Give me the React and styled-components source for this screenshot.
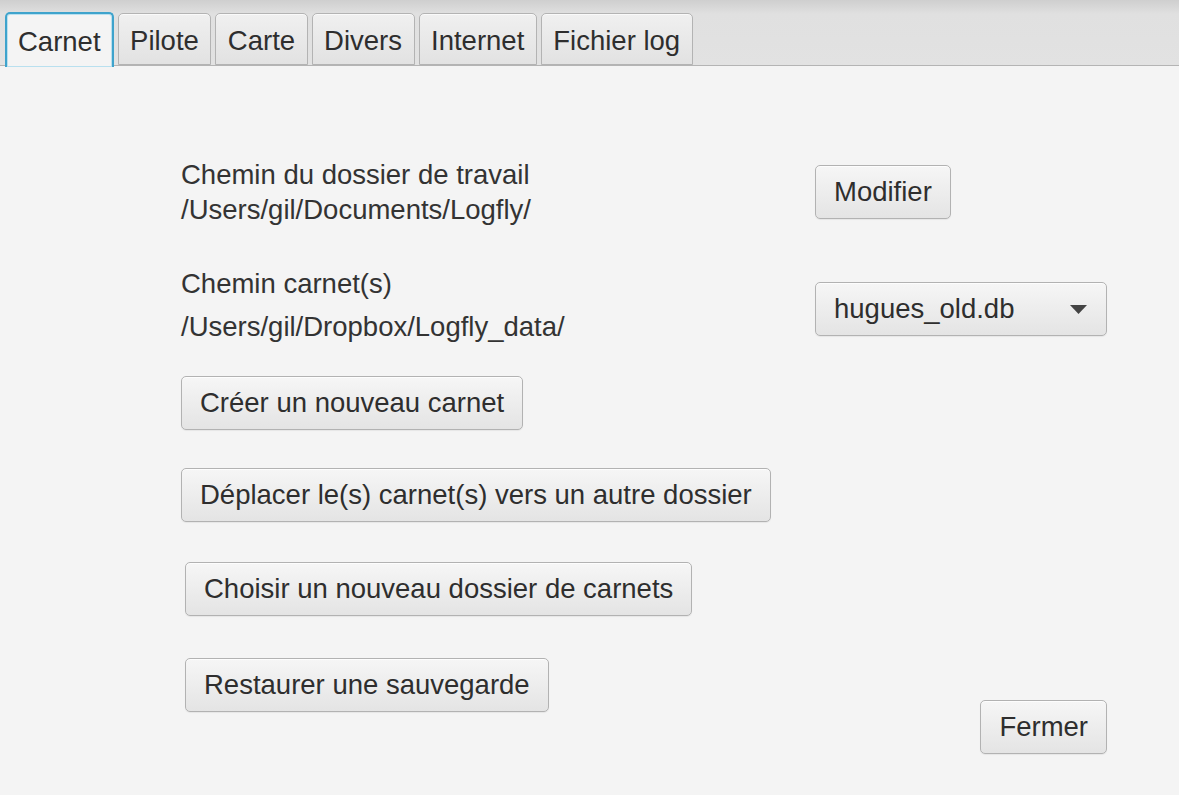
import React, { useState } from 'react';
import styled, { createGlobalStyle } from 'styled-components';

const GlobalStyle = createGlobalStyle`
  html, body {
    margin: 0;
    padding: 0;
    background: #f4f4f4;
  }
  body {
    font-family: "Liberation Sans", Arial, sans-serif;
    color: #333;
  }
`;

const Window = styled.div`
  width: 1179px;
  height: 795px;
  background: #f4f4f4;
  display: flex;
  flex-direction: column;
  overflow: hidden;
`;

const TabBar = styled.div`
  height: 65px;
  flex: none;
  display: flex;
  align-items: flex-end;
  gap: 4px;
  padding-left: 5px;
  background: linear-gradient(#cfcfcf 0px, #e0e0e0 14px, #e2e2e2 100%);
  border-bottom: 1px solid #b4b4b4;
`;

const Tab = styled.div`
  height: ${p => (p.active ? '55px' : '52px')};
  margin-bottom: ${p => (p.active ? '-2px' : '0')};
  padding: 0 ${p => (p.active ? '11px' : '11.5px')};
  padding-top: 3px;
  box-sizing: border-box;
  display: flex;
  align-items: center;
  font-size: 27.5px;
  color: #2e2e2e;
  border-radius: 5px 5px 0 0;
  border: ${p => (p.active ? '2px solid #3ea3cc' : '1px solid #b3b3b3')};
  border-bottom: ${p => (p.active ? 'none' : '1px solid #b3b3b3')};
  background: ${p =>
    p.active ? '#f4f4f4' : 'linear-gradient(#f0f0f0, #e2e2e2)'};
  box-shadow: ${p =>
    p.active ? 'inset 0 0 0 1px #b9e0ef' : 'inset 0 1px 0 #fafafa'};
  cursor: default;
`;

const Body = styled.div`
  flex: 1;
  display: flex;
  flex-direction: column;
  padding: 0 72px 0 181px;
`;

const Row = styled.div`
  display: grid;
  grid-template-columns: 634px 1fr;
  align-items: start;
  margin-top: ${p => p.top}px;
`;

const LabelBlock = styled.div`
  display: flex;
  flex-direction: column;
  gap: ${p => p.gap || 0}px;
`;

const Label = styled.div`
  font-size: 27.5px;
  line-height: ${p => p.lh || 33}px;
  color: #333;
  white-space: nowrap;
`;

const Button = styled.button`
  justify-self: ${p => (p.right ? 'end' : 'start')};
  align-self: start;
  margin-left: ${p => p.indent || 0}px;
  margin-top: ${p => p.drop || 0}px;
  height: 54px;
  padding: 0 18px;
  box-sizing: border-box;
  font-family: "Liberation Sans", Arial, sans-serif;
  font-size: 27.5px;
  color: #2e2e2e;
  white-space: nowrap;
  background: linear-gradient(#f6f6f6, #e4e4e4);
  border: 1px solid #b2b2b2;
  border-radius: 5px;
  box-shadow: inset 0 1px 0 #fdfdfd, 0 1px 1px rgba(0, 0, 0, 0.06);
  cursor: default;
`;

const Combo = styled.div`
  width: 292px;
  height: 54px;
  margin-top: ${p => p.drop || 0}px;
  box-sizing: border-box;
  display: flex;
  align-items: center;
  justify-content: space-between;
  padding: 0 19px 0 18px;
  font-size: 27.5px;
  color: #2e2e2e;
  background: linear-gradient(#f6f6f6, #e4e4e4);
  border: 1px solid #b2b2b2;
  border-radius: 5px;
  box-shadow: inset 0 1px 0 #fdfdfd, 0 1px 1px rgba(0, 0, 0, 0.06);
`;

const ButtonColumn = styled.div`
  display: flex;
  flex-direction: column;
  align-items: flex-start;
  margin-top: ${p => p.top}px;
`;

const Spaced = styled.div`
  margin-top: ${p => p.top}px;
  margin-left: ${p => p.indent || 0}px;
`;

const Arrow = () => (
  <svg width="17" height="9" viewBox="0 0 17 9">
    <polygon points="0,0 17,0 8.5,9" fill="#444" />
  </svg>
);

const tabs = ['Carnet', 'Pilote', 'Carte', 'Divers', 'Internet', 'Fichier log'];

export default function App() {
  const [active, setActive] = useState(0);

  return (
    <Window>
      <GlobalStyle />
      <TabBar>
        {tabs.map((t, i) => (
          <Tab key={t} active={i === active} onClick={() => setActive(i)}>
            {t}
          </Tab>
        ))}
      </TabBar>
      <Body>
        <Row top={91}>
          <LabelBlock>
            <Label lh={35}>Chemin du dossier de travail</Label>
            <Label lh={35}>/Users/gil/Documents/Logfly/</Label>
          </LabelBlock>
          <Button drop={8}>Modifier</Button>
        </Row>
        <Row top={40}>
          <LabelBlock gap={10}>
            <Label>Chemin carnet(s)</Label>
            <Label>/Users/gil/Dropbox/Logfly_data/</Label>
          </LabelBlock>
          <Combo drop={15}>
            <span>hugues_old.db</span>
            <Arrow />
          </Combo>
        </Row>
        <ButtonColumn top={33}>
          <Button>Créer un nouveau carnet</Button>
          <Spaced top={38}>
            <Button>Déplacer le(s) carnet(s) vers un autre dossier</Button>
          </Spaced>
          <Spaced top={40} indent={4}>
            <Button>Choisir un nouveau dossier de carnets</Button>
          </Spaced>
        </ButtonColumn>
        <Row top={42}>
          <Button indent={4}>Restaurer une sauvegarde</Button>
          <Button right drop={42}>Fermer</Button>
        </Row>
      </Body>
    </Window>
  );
}
